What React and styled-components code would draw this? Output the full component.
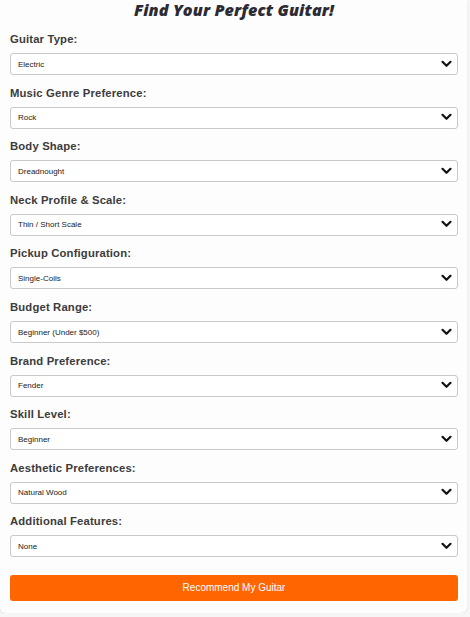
import React from "react";
import styled, { createGlobalStyle } from "styled-components";

const Global = createGlobalStyle`
  html, body { margin: 0; padding: 0; background: #f6f6f6; }
  * { box-sizing: border-box; }
`;

const Card = styled.div`
  width: 467px;
  background: #fdfdfd;
  border-radius: 0 0 6px 6px;
  box-shadow: 0 1px 2px rgba(0,0,0,0.1);
  padding: 1px 9px 12px 10px;
  font-family: "Liberation Sans", Arial, sans-serif;
`;

const Title = styled.h1`
  margin: 0 0 12px;
  text-align: center;
  font-family: "Open Sans", sans-serif;
  font-style: italic;
  font-weight: 800;
  font-size: 16.2px;
  line-height: 19px;
  color: #2b2b33;
  letter-spacing: 0.1px;
`;

const Group = styled.div`
  display: flex;
  flex-direction: column;
  margin-bottom: 11px;
`;

const Label = styled.label`
  font-size: 11.3px;
  font-weight: 700;
  line-height: 14.6px;
  color: #3c3c3c;
  margin-bottom: 6px;
  letter-spacing: 0.15px;
`;

const SelectWrap = styled.div`
  position: relative;
  height: 22px;
`;

const Select = styled.select`
  appearance: none;
  -webkit-appearance: none;
  width: 100%;
  height: 22px;
  border: 1px solid #c9c9c9;
  border-radius: 3px;
  background: #fff;
  font-family: "Liberation Sans", Arial, sans-serif;
  font-size: 8px;
  color: #222;
  padding: 0 0 0 7px;
  outline: none;
`;

const Chevron = styled.svg`
  position: absolute;
  right: 6px;
  top: 7px;
  width: 11px;
  height: 8px;
  pointer-events: none;
`;

const Button = styled.button`
  display: block;
  width: 100%;
  height: 26px;
  margin-top: 18px;
  border: none;
  border-radius: 3px;
  background: #ff6600;
  color: #fff;
  font-family: "Liberation Sans", Arial, sans-serif;
  font-size: 10px;
  cursor: pointer;
`;

const fields = [
  ["Guitar Type:", "Electric"],
  ["Music Genre Preference:", "Rock"],
  ["Body Shape:", "Dreadnought"],
  ["Neck Profile & Scale:", "Thin / Short Scale"],
  ["Pickup Configuration:", "Single-Coils"],
  ["Budget Range:", "Beginner (Under $500)"],
  ["Brand Preference:", "Fender"],
  ["Skill Level:", "Beginner"],
  ["Aesthetic Preferences:", "Natural Wood"],
  ["Additional Features:", "None"],
];

export default function App() {
  return (
    <>
      <Global />
      <Card>
        <Title>Find Your Perfect Guitar!</Title>
        {fields.map(([label, value]) => (
          <Group key={label}>
            <Label>{label}</Label>
            <SelectWrap>
              <Select defaultValue={value}>
                <option>{value}</option>
              </Select>
              <Chevron viewBox="0 0 11 8">
                <path d="M1.5 1.8 L5.5 5.8 L9.5 1.8" fill="none" stroke="#111" strokeWidth="2.2" strokeLinecap="round" strokeLinejoin="round" />
              </Chevron>
            </SelectWrap>
          </Group>
        ))}
        <Button>Recommend My Guitar</Button>
      </Card>
    </>
  );
}
